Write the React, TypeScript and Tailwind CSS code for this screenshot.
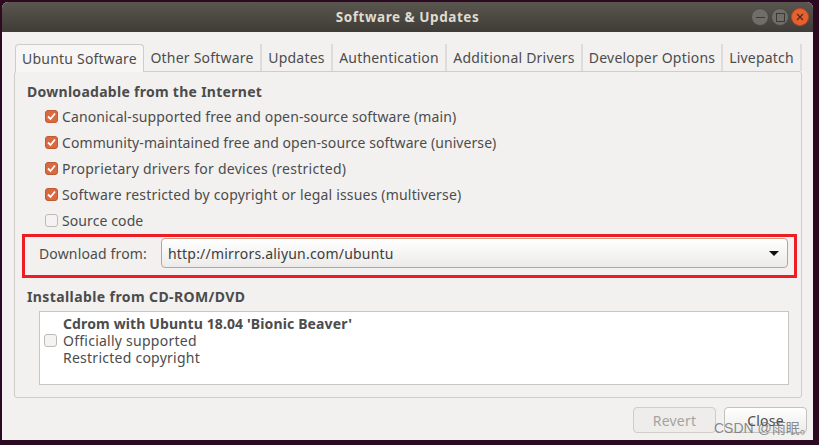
import React from 'react';

const tabs = [
  { label: 'Ubuntu Software', width: 'w-[129px]', active: true },
  { label: 'Other Software', width: 'w-[118px]' },
  { label: 'Updates', width: 'w-[71px]' },
  { label: 'Authentication', width: 'w-[114px]' },
  { label: 'Additional Drivers', width: 'w-[136px]' },
  { label: 'Developer Options', width: 'w-[140px]' },
  { label: 'Livepatch', width: 'w-[79px]' },
];

const sources = [
  { label: 'Canonical-supported free and open-source software (main)', checked: true, tracking: 'tracking-[0.12px]' },
  { label: 'Community-maintained free and open-source software (universe)', checked: true, tracking: 'tracking-[0.08px]' },
  { label: 'Proprietary drivers for devices (restricted)', checked: true, tracking: 'tracking-[0.26px]' },
  { label: 'Software restricted by copyright or legal issues (multiverse)', checked: true, tracking: 'tracking-[0.18px]' },
  { label: 'Source code', checked: false, tracking: 'tracking-[0.1px]' },
];

const Check: React.FC<{ checked?: boolean; className?: string }> = ({ checked, className = '' }) =>
  checked ? (
    <span className={`w-[13px] h-[13px] rounded-[3px] bg-[#d9693f] border border-[#c05a35] flex items-center justify-center shrink-0 ${className}`}>
      <svg width="11" height="11" viewBox="0 0 11 11" fill="none">
        <path d="M2 5.5 L4.5 8 L9 2.5" stroke="#ffffff" strokeWidth="1.8" />
      </svg>
    </span>
  ) : (
    <span className={`w-[13px] h-[13px] rounded-[3px] bg-[#f4f3f2] border border-[#bdbbb8] shrink-0 ${className}`} />
  );

const App: React.FC = () => {
  return (
    <div className="relative w-[819px] h-[445px] overflow-hidden bg-[#2c0a22] pl-[2px] pt-[2px] text-[14px] text-[#4c4c4c] font-['Noto_Sans',sans-serif]">
      <div className="w-[811px] h-[438px] flex flex-col bg-[#f2f1f0] rounded-t-[6px] overflow-hidden">
        <header className="relative h-[30px] shrink-0 bg-gradient-to-b from-[#5a5750] to-[#3f3c37] flex items-center justify-center">
          <h1 className="text-[13.5px] font-bold text-[#dfdbd2] tracking-[0.55px]">Software &amp; Updates</h1>
          <div className="absolute right-[4px] top-[6px] flex gap-[2px]">
            <span className="w-[18px] h-[18px] rounded-full bg-[#6f6d67] border border-[#4a4843] flex items-center justify-center">
              <span className="w-[9px] h-px bg-[#3b3935]" />
            </span>
            <span className="w-[18px] h-[18px] rounded-full bg-[#6f6d67] border border-[#4a4843] flex items-center justify-center">
              <span className="w-[9px] h-[9px] border border-[#3b3935]" />
            </span>
            <span className="w-[18px] h-[18px] rounded-full bg-[#e9602f] border border-[#b9492a] flex items-center justify-center">
              <svg width="8" height="8" viewBox="0 0 8 8">
                <path d="M1 1 L7 7 M7 1 L1 7" stroke="#4a2a1c" strokeWidth="1.2" />
              </svg>
            </span>
          </div>
        </header>

        <main className="flex-1 flex flex-col pl-[12px] pr-[11px] pt-[12px] min-h-0">
          <nav className="flex h-[28px] pl-[1px] shrink-0 relative z-10">
            {tabs.map((tab) => (
              <div
                key={tab.label}
                className={`${tab.width} shrink-0 flex items-center justify-center text-[#4c4c4c] ${
                  tab.active
                    ? 'bg-[#f7f6f5] border border-b-0 border-[#cfcdca] rounded-t-[4px] h-[28px]'
                    : 'border-r-2 border-[#dedcda] h-[27px]'
                }`}
              >
                <span className="tracking-[0.2px]">{tab.label}</span>
              </div>
            ))}
          </nav>

          <section className="w-[788px] h-[327px] -mt-px border border-[#cfcdca] rounded-[3px] pt-[10px] flex flex-col">
            <h2 className="ml-[12px] h-[20px] font-bold leading-[20px] tracking-[0.28px]">Downloadable from the Internet</h2>
            <ul className="mt-[1px] ml-[30px] flex flex-col">
              {sources.map((source) => (
                <li key={source.label} className="h-[26px] flex items-center gap-[4px]">
                  <Check checked={source.checked} />
                  <span className={source.tracking}>{source.label}</span>
                </li>
              ))}
            </ul>

            <div className="ml-[7px] mt-[1px] w-[775px] h-[44px] border-[3px] border-[#ee1c25] flex items-start pl-[14px] pt-px">
              <span className="w-[122px] shrink-0 h-[30px] leading-[32px] tracking-[0.15px]">Download from:</span>
              <div className="w-[627px] h-[30px] rounded-[4px] border border-[#d79a80] bg-gradient-to-b from-[#ffffff] to-[#ecebe9] flex items-center justify-between pl-[6px] pr-[8px]">
                <span className="text-[#3c3c3c] tracking-[0.2px]">http://mirrors.aliyun.com/ubuntu</span>
                <span className="w-0 h-0 border-x-[5px] border-x-transparent border-t-[5px] border-t-[#111111]" />
              </div>
            </div>

            <h2 className="ml-[12px] mt-[9px] h-[20px] font-bold leading-[20px] tracking-[0.4px]">Installable from CD-ROM/DVD</h2>
            <div className="ml-[24px] mt-[4px] w-[750px] h-[74px] bg-white border border-[#c8c6c4] flex items-center pl-[4px]">
              <Check className="mb-[16px]" />
              <div className="ml-[6px] flex flex-col leading-[17px] -mt-[15px]">
                <span className="font-bold tracking-[0.13px]">Cdrom with Ubuntu 18.04 'Bionic Beaver'</span>
                <span className="tracking-[0.25px]">Officially supported</span>
                <span className="tracking-[0.25px]">Restricted copyright</span>
              </div>
            </div>
          </section>

          <footer className="flex justify-end gap-[8px] mt-[9px] w-[793px]">
            <button className="w-[83px] h-[26px] rounded-[4px] border border-[#cfcdca] bg-[#eeedeb] text-[#a5a3a0] tracking-[0.2px]">Revert</button>
            <button className="w-[83px] h-[26px] rounded-[4px] border border-[#c4c2bf] bg-gradient-to-b from-[#ffffff] to-[#ecebe9] text-[#4c4c4c] tracking-[0.2px]">Close</button>
          </footer>
        </main>
      </div>

      <span className="absolute left-[714px] top-[419px] text-[14px] leading-[18px] text-[#6f6f6f]/80 font-['Liberation_Sans','Noto_Sans_CJK_SC',sans-serif]">
        CSDN @雨眠。
      </span>
    </div>
  );
};

export default App;
